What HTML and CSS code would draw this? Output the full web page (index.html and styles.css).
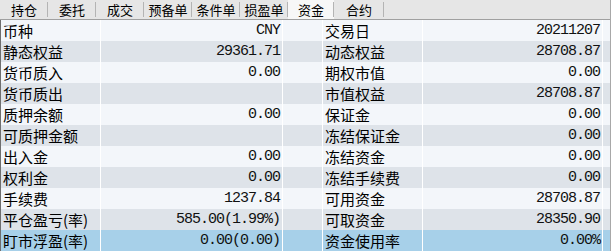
FILE: index.html
```html
<html>
<head>
<title>资金</title>
<link rel="stylesheet" href="styles.css">
</head>
<body>
<div class="panel">
  <div class="tabs">
    <span class="tab">持仓</span>
    <span class="tab">委托</span>
    <span class="tab">成交</span>
    <span class="tab">预备单</span>
    <span class="tab">条件单</span>
    <span class="tab">损盈单</span>
    <span class="tab active">资金</span>
    <span class="tab">合约</span>
  </div>
  <div class="grid">
    <div class="row odd"><span class="lbl">币种</span><span class="val">CNY</span><span></span><span class="lbl">交易日</span><span class="val">20211207</span><span></span></div>
    <div class="row even"><span class="lbl">静态权益</span><span class="val">29361.71</span><span></span><span class="lbl">动态权益</span><span class="val">28708.87</span><span></span></div>
    <div class="row odd"><span class="lbl">货币质入</span><span class="val">0.00</span><span></span><span class="lbl">期权市值</span><span class="val">0.00</span><span></span></div>
    <div class="row even"><span class="lbl">货币质出</span><span class="val"></span><span></span><span class="lbl">市值权益</span><span class="val">28708.87</span><span></span></div>
    <div class="row odd"><span class="lbl">质押余额</span><span class="val">0.00</span><span></span><span class="lbl">保证金</span><span class="val">0.00</span><span></span></div>
    <div class="row even"><span class="lbl">可质押金额</span><span class="val"></span><span></span><span class="lbl">冻结保证金</span><span class="val">0.00</span><span></span></div>
    <div class="row odd"><span class="lbl">出入金</span><span class="val">0.00</span><span></span><span class="lbl">冻结资金</span><span class="val">0.00</span><span></span></div>
    <div class="row even"><span class="lbl">权利金</span><span class="val">0.00</span><span></span><span class="lbl">冻结手续费</span><span class="val">0.00</span><span></span></div>
    <div class="row odd"><span class="lbl">手续费</span><span class="val">1237.84</span><span></span><span class="lbl">可用资金</span><span class="val">28708.87</span><span></span></div>
    <div class="row even"><span class="lbl">平仓盈亏(率)</span><span class="val">585.00(1.99%)</span><span></span><span class="lbl">可取资金</span><span class="val">28350.90</span><span></span></div>
    <div class="row sel"><span class="lbl">盯市浮盈(率)</span><span class="val">0.00(0.00)</span><span></span><span class="lbl">资金使用率</span><span class="val">0.00%</span><span></span></div>
  </div>
</div>
</body>
</html>
```
FILE: styles.css
```css
body { margin:0; background:#fff; color:#000; font-family:"Noto Sans CJK SC", "Liberation Sans", sans-serif; }
.panel { width:610px; border-right:1px solid #a8a8a8; }
.tabs { display:flex; height:19px; background:#e6e6e6; border-bottom:1px solid #a0a0a0; }
.tab { width:48px; font-size:13px; line-height:19px; text-align:center; box-sizing:border-box;
  background:linear-gradient(#b4b4b4, #b4b4b4) right 2px / 1px 15px no-repeat; }
.tab.active { background-color:#f7f7f7; width:46px; }
.tab:nth-child(8) { width:50px; }
.grid { border-left:1px solid #6e6e6e; }
.row { display:grid; grid-template-columns:99px 181px 39px 99px 179px 7px; column-gap:1px; background:#fff; height:21px; }
.row span { line-height:21px; overflow:hidden; white-space:nowrap; }
.odd span { background:#f3f6fa; }
.even span { background:#dee3e9; }
.sel span { background:#a7d0e9; }
.lbl { font-size:15px; padding-left:2px; }
.val { font-family:"Liberation Mono", monospace; font-size:15px; letter-spacing:-1px; text-align:right; padding-right:2px; color:#111; }
```
